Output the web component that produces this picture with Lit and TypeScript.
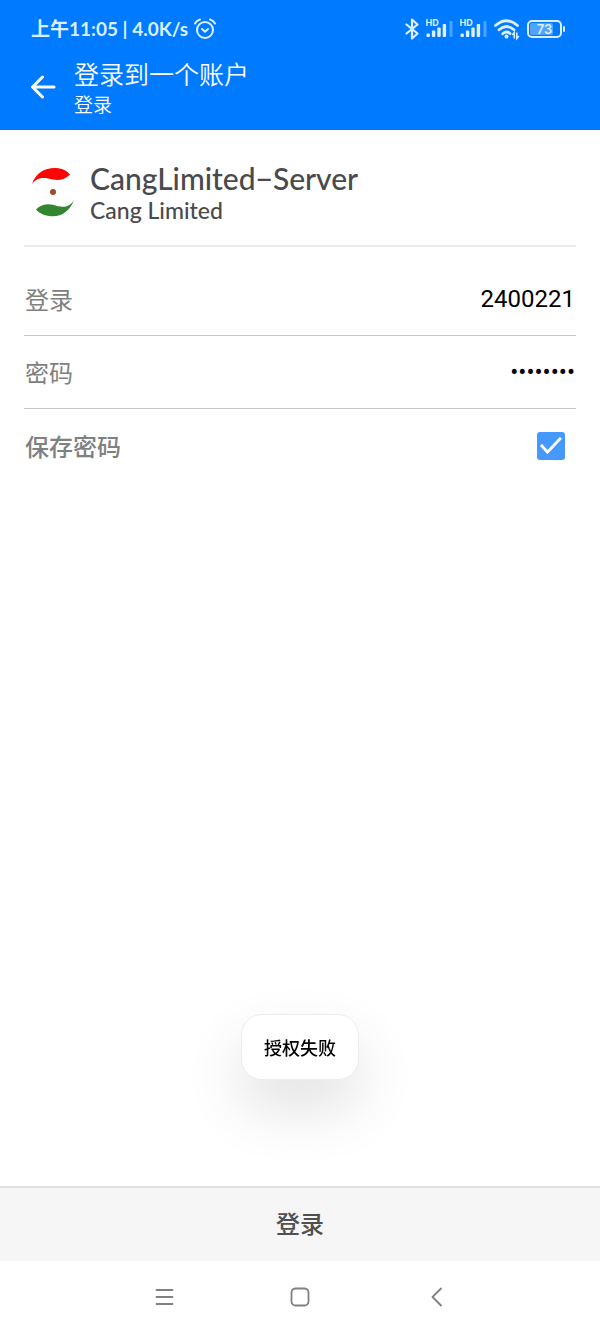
import { LitElement, html, css, svg } from "lit";
import { customElement, property, state } from "lit/decorators.js";

@customElement("status-bar")
class StatusBar extends LitElement {
  static styles = css`
    :host {
      display: flex;
      justify-content: space-between;
      align-items: center;
      height: 58px;
      padding: 0 34px 0 31px;
      color: #dcefff;
      font: 700 19px/24px Lato, "Noto Sans CJK SC", sans-serif;
    }
    .group {
      display: flex;
      align-items: center;
    }
    .time {
      gap: 6px;
      white-space: pre;
    }
    .signals {
      gap: 6px;
    }
    svg {
      display: block;
    }
    .battery-label {
      font: 600 13px Inter, sans-serif;
    }
    .hd-label {
      font: 700 9px Inter, sans-serif;
    }
  `;

  private signal() {
    return html`<svg width="28" height="24" viewBox="0 0 28 24" fill="#dcefff">
      <text class="hd-label" x="-.5" y="9">HD</text>
      ${[3.5, 6.5, 9.5, 13].map(
        (h, i) => svg`<rect x=${0.5 + i * 5.4} y=${20 - h} width="3.400" height=${h} rx="1" />`
      )}
      <rect x="23.500" y="4" width="3" height="16" rx="1" opacity=".35" />
    </svg>`;
  }

  render() {
    return html`
      <div class="group time">
        <span>上午11:05 | 4.0K/s</span>
        <svg width="22" height="22" viewBox="0 0 22 22" fill="none" stroke="#dcefff" stroke-width="2" stroke-linecap="round" stroke-linejoin="round">
          <circle cx="11" cy="12" r="8" />
          <path d="M8 11l3 2.700 3-2.700M1 5.500Q2.500 2.500 6 1.500M21 5.500Q19.500 2.500 16 1.500" />
        </svg>
      </div>
      <div class="group signals">
        <svg width="15" height="24" viewBox="0 0 15 24" fill="none" stroke="#dcefff" stroke-width="2.200" stroke-linejoin="round" stroke-linecap="round">
          <path d="M1.500 7.500L12.500 16.500l-5.500 5V2.500l5.500 5L1.500 16.500" />
        </svg>
        ${this.signal()} ${this.signal()}
        <svg width="27" height="24" viewBox="0 0 27 24" fill="none" stroke="#dcefff" stroke-width="2.800" stroke-linecap="round">
          <path d="M1.500 8.500Q12.500 -1 23.500 8.500M5 12.800Q12.500 6.200 20 12.800M8.700 16.800Q12.500 13.500 16 16.500" />
          <circle cx="12.500" cy="19.500" r="2" fill="#dcefff" stroke="none" />
          <path stroke-width="1.500" stroke-linecap="butt" d="M20.300 21.500v-6l-2 2.500M22.800 15.500v6l2-2.500" />
        </svg>
        <svg width="39" height="24" viewBox="0 0 39 24">
          <rect x="3" y="6" width="23" height="12" rx="2" fill="#4da5ff" />
          <rect x="1" y="4" width="33" height="16" rx="4" fill="none" stroke="#dcefff" stroke-width="2" />
          <rect x="36" y="9" width="2" height="6" rx="1" fill="#dcefff" />
          <text class="battery-label" x="17.500" y="16.700" text-anchor="middle" fill="#dcefff">73</text>
        </svg>
      </div>
    `;
  }
}

@customElement("title-bar")
class TitleBar extends LitElement {
  static styles = css`
    :host {
      display: flex;
      align-items: center;
      gap: 18px;
      height: 72px;
      padding: 0 30px 14px;
      box-sizing: border-box;
      color: #fff;
      font-family: "Noto Sans CJK SC", sans-serif;
    }
    .back {
      display: block;
      padding: 0;
      border: 0;
      background: none;
    }
    .back svg {
      display: block;
    }
    .title {
      margin: 0;
      font-size: 25px;
      line-height: 34px;
      font-weight: 350;
    }
    .subtitle {
      margin: 0;
      font-size: 19px;
      line-height: 28px;
      font-weight: 350;
    }
  `;

  @property() heading = "";
  @property() subheading = "";

  render() {
    return html`
      <button class="back" aria-label="返回">
        <svg width="26" height="24" viewBox="0 0 26 24" fill="none" stroke="#fff" stroke-width="3" stroke-linecap="round" stroke-linejoin="round">
          <path d="M24 12H3M12.500 2L2.500 12l10 10" />
        </svg>
      </button>
      <div>
        <h1 class="title">${this.heading}</h1>
        <p class="subtitle">${this.subheading}</p>
      </div>
    `;
  }
}

@customElement("app-root")
class AppRoot extends LitElement {
  static styles = css`
    :host {
      display: flex;
      flex-direction: column;
      min-height: 100vh;
      background: #fff;
      font-family: Lato, "Noto Sans CJK SC", sans-serif;
    }
    .top {
      background: #007aff;
    }
    .form {
      flex: 1;
      padding: 0 24px;
    }
    .brand {
      display: flex;
      align-items: flex-start;
      gap: 9px;
      padding: 30px 0 20px;
      border-bottom: 2px solid #ebebeb;
      color: #4a4a4c;
      margin-bottom: 16px;
    }
    .brand svg {
      display: block;
    }
    .name {
      margin: 0;
      font-weight: 500;
      font-size: 30px;
      line-height: 36px;
    }
    .company {
      margin: 0;
      font-weight: 500;
      font-size: 23px;
      line-height: 29px;
    }
    .row {
      display: flex;
      align-items: center;
      justify-content: space-between;
      gap: 16px;
      height: 72px;
      padding: 0 1px;
      border-bottom: 1px solid #c8c8c8;
    }
    .row.last {
      height: 74px;
      border-bottom: 0;
    }
    .label {
      color: #808080;
      font-size: 24px;
      line-height: 36px;
      font-family: "Noto Sans CJK SC", sans-serif;
      white-space: nowrap;
    }
    .last .label {
      font-weight: 500;
    }
    .field {
      flex: 1;
      min-width: 0;
      padding: 0;
      border: 0;
      outline: 0;
      background: none;
      color: #000;
      text-align: right;
      font: 24px/36px Roboto, sans-serif;
    }
    .tick {
      appearance: none;
      width: 28px;
      height: 28px;
      margin: 0 10px 0 0;
      border-radius: 3px;
      background: #4599fc;
      display: grid;
      place-items: center;
    }
    .tick:checked::before {
      content: "";
      width: 22px;
      height: 18px;
      background: #fff;
      clip-path: polygon(0 50%, 9% 38%, 34% 72%, 90% 0, 100% 10%, 34% 96%);
    }
    .toast {
      position: fixed;
      left: 50%;
      bottom: 253px;
      transform: translateX(-50%);
      padding: 18px 22px;
      border: 1px solid #ececec;
      border-radius: 21px;
      background: #fff;
      color: #000;
      font: 500 18px/28px "Noto Sans CJK SC", sans-serif;
      white-space: nowrap;
      box-shadow: 0 28px 60px rgba(0, 0, 0, 0.12);
    }
    .submit {
      height: 75px;
      padding: 0 0 3px;
      border: 0;
      border-top: 2px solid #e0e0e0;
      background: #f6f6f6;
      color: #4f4f4f;
      font: 500 24px/36px "Noto Sans CJK SC", sans-serif;
    }
    .nav {
      display: grid;
      grid-template-columns: repeat(3, 136px);
      justify-content: center;
      height: 72px;
    }
    .nav button {
      display: grid;
      place-items: center;
      padding: 0;
      border: 0;
      background: none;
    }
  `;

  @state() private save = true;

  private icon(d: unknown) {
    return html`<svg width="20" height="22" viewBox="0 0 20 22" fill="none" stroke="#808080" stroke-width="1.800" stroke-linecap="round" stroke-linejoin="round">${d}</svg>`;
  }

  render() {
    return html`
      <header class="top">
        <status-bar></status-bar>
        <title-bar heading="登录到一个账户" subheading="登录"></title-bar>
      </header>
      <main class="form">
        <section class="brand">
          <svg width="57" height="60" viewBox="0 0 57 60" aria-hidden="true">
            <path fill="#fb0505" d="M8 24C12 12 22 7.500 32 8C39 8.500 43 11 46 14.500C41 19.500 35 20.800 29 19.500C20 17 13 17 8 24Z" />
            <circle cx="29" cy="32" r="3" fill="#a34c28" />
            <path fill="#33862f" d="M50 40C46 51 38 56.500 28 56.200C20 56 15 53 12 49.500C17 44.500 23 43.500 29 44.800C38 48 45 48 50 40Z" />
          </svg>
          <div>
            <h2 class="name">CangLimited−Server</h2>
            <p class="company">Cang Limited</p>
          </div>
        </section>
        <div class="row">
          <label class="label" for="login">登录</label>
          <input class="field" id="login" type="text" value="2400221" />
        </div>
        <div class="row">
          <label class="label" for="password">密码</label>
          <input class="field" id="password" type="password" value="12345678" />
        </div>
        <div class="row last">
          <label class="label" for="save">保存密码</label>
          <input
            class="tick"
            id="save"
            type="checkbox"
            .checked=${this.save}
            @change=${(e: Event) => (this.save = (e.target as HTMLInputElement).checked)}
          />
        </div>
      </main>
      <button class="submit">登录</button>
      <nav class="nav">
        <button aria-label="菜单">${this.icon(svg`<path d="M2.500 4h16M2.500 11h16M2.500 18h16" />`)}</button>
        <button aria-label="主页">${this.icon(svg`<rect x="1.500" y="2.500" width="17" height="17" rx="4" />`)}</button>
        <button aria-label="返回">${this.icon(svg`<path d="M15 2.500L6.500 11l8.500 8.500" />`)}</button>
      </nav>
      <div class="toast" role="status">授权失败</div>
    `;
  }
}
